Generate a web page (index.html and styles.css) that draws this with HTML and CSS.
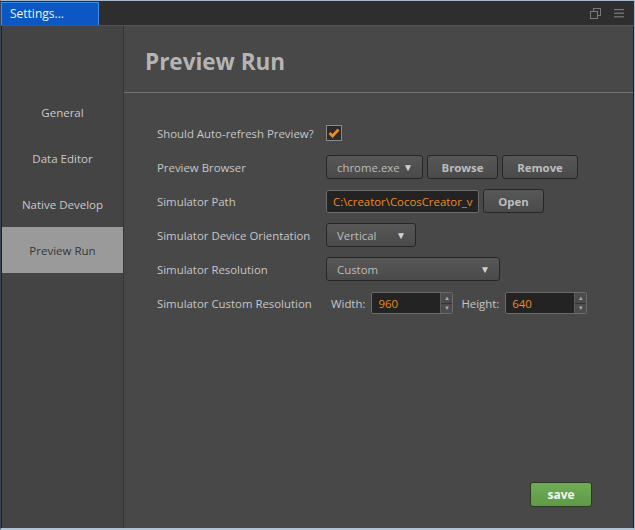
FILE: index.html
```html
<!DOCTYPE html>
<html>
<head>
<meta charset="utf-8">
<link rel="stylesheet" href="styles.css">
</head>
<body>
<div class="frame">
  <div class="titlebar">
    <div class="tab">Settings...</div>
    <div class="tools">
      <svg class="ico" width="11" height="11" viewBox="0 0 11 11"><rect x="3.5" y="0.5" width="7" height="7" fill="none" stroke="#7a7a7a"/><rect x="0.5" y="3.5" width="7" height="7" fill="#2f2f2f" stroke="#7a7a7a"/></svg>
      <svg class="ico" width="10" height="9" viewBox="0 0 10 9"><rect x="0" y="0" width="10" height="1.2" fill="#7a7a7a"/><rect x="0" y="3.6" width="10" height="1.2" fill="#7a7a7a"/><rect x="0" y="7.2" width="10" height="1.2" fill="#7a7a7a"/></svg>
    </div>
  </div>
  <div class="main">
    <nav class="sidebar">
      <div class="nav-item">General</div>
      <div class="nav-item">Data Editor</div>
      <div class="nav-item">Native Develop</div>
      <div class="nav-item active">Preview Run</div>
    </nav>
    <section class="content">
      <header class="head"><h1>Preview Run</h1></header>
      <div class="form">
        <div class="row">
          <div class="label">Should Auto-refresh Preview?</div>
          <div class="ctl">
            <span class="check"><svg width="12" height="10" viewBox="0 0 12 10"><path d="M1.5 5 L4.5 8 L10.5 1.5" fill="none" stroke="#f08c22" stroke-width="2.6"/></svg></span>
          </div>
        </div>
        <div class="row">
          <div class="label">Preview Browser</div>
          <div class="ctl">
            <div class="select w-chrome"><span>chrome.exe</span><span class="arrow">&#9660;</span></div>
            <button class="btn w-browse">Browse</button>
            <button class="btn w-remove">Remove</button>
          </div>
        </div>
        <div class="row">
          <div class="label">Simulator Path</div>
          <div class="ctl">
            <div class="input w-path">C:\creator\CocosCreator_v</div>
            <button class="btn w-open">Open</button>
          </div>
        </div>
        <div class="row">
          <div class="label">Simulator Device Orientation</div>
          <div class="ctl">
            <div class="select w-vert"><span>Vertical</span><span class="arrow">&#9660;</span></div>
          </div>
        </div>
        <div class="row">
          <div class="label">Simulator Resolution</div>
          <div class="ctl">
            <div class="select w-custom"><span>Custom</span><span class="arrow">&#9660;</span></div>
          </div>
        </div>
        <div class="row">
          <div class="label">Simulator Custom Resolution</div>
          <div class="ctl res">
            <span class="sub">Width:</span>
            <div class="num"><span class="val">960</span><span class="spin"><span class="up">&#9650;</span><span class="dn">&#9660;</span></span></div>
            <span class="sub sub2">Height:</span>
            <div class="num"><span class="val">640</span><span class="spin"><span class="up">&#9650;</span><span class="dn">&#9660;</span></span></div>
          </div>
        </div>
      </div>
      <div class="footer"><button class="save">save</button></div>
    </section>
  </div>
</div>
</body>
</html>
```

FILE: styles.css
```css
html, body { margin: 0; padding: 0; }
body { background: #b9c6d6; font-family: "Open Sans", "Noto Sans", sans-serif; }
.frame {
  width: 635px; height: 530px; box-sizing: border-box;
  border: 1px solid #a7b6c8; border-left-color: #3c4656; border-bottom: 2px solid #b3c2d4;
  background: #1f1f1f; display: flex; flex-direction: column;
}
.titlebar {
  height: 24px; background: #2e2e2e; border-bottom: 1px solid #555;
  display: flex; align-items: stretch; justify-content: space-between;
}
.tab {
  width: 98px; box-sizing: border-box; margin-top: 1px;
  background: #0b57c3; border: 1px solid #3b8de6; border-bottom: none;
  color: #f2f2f2; font-size: 12px; line-height: 22px; padding-left: 8px;
}
.tools { display: flex; align-items: center; gap: 13px; padding-right: 10px; }
.ico { display: block; }
.main { flex: 1; display: flex; margin: 0 1px 0 1px; min-height: 0; }
.sidebar {
  width: 121px; background: #444; border-right: 1px solid #363636;
  padding-top: 63px; display: flex; flex-direction: column;
}
.nav-item {
  height: 46px; display: flex; align-items: center; justify-content: center;
  color: #c9c9c9; font-size: 11.5px;
}
.nav-item.active { background: #9a9a9a; color: #363636; }
.content { flex: 1; background: #484848; display: flex; flex-direction: column; }
.head { height: 66px; border-bottom: 1px solid #737373; display: flex; align-items: flex-end; }
.head h1 {
  margin: 0 0 17px 21px; font-size: 22.5px; font-weight: bold; color: #b4b4b4;
  line-height: 26px;
}
.form { padding: 23px 0 0 33px; }
.row { height: 34px; display: flex; align-items: center; }
.label { width: 169px; color: #c6c6c6; font-size: 11.4px; }
.ctl { display: flex; align-items: center; gap: 4px; }
.check {
  width: 14px; height: 14px; border: 1px solid #8a8a8a; background: #2b2b2b;
  display: flex; align-items: center; justify-content: center;
}
.select, .btn {
  height: 24px; box-sizing: border-box; border: 1px solid #262626; border-radius: 3px;
  background: linear-gradient(#575757, #4a4a4a); color: #bdbdbd; font-size: 11.4px;
  font-family: inherit;
}
.select { display: flex; align-items: center; justify-content: space-between; padding: 0 9px 0 10px; }
.arrow { font-size: 10px; color: #d0d0d0; }
.btn { font-weight: bold; padding: 0; cursor: default; }
.w-chrome { width: 97px; }
.w-browse { width: 71px; }
.w-remove { width: 76px; }
.w-path { width: 153px; }
.w-open { width: 61px; }
.w-vert { width: 90px; }
.w-custom { width: 174px; }
.input {
  height: 23px; box-sizing: border-box; border: 1px solid #6a6a6a; border-radius: 2px;
  background: #232323; color: #ef8a22; font-size: 11.4px; padding-left: 6px;
  display: flex; align-items: center; overflow: hidden; white-space: nowrap;
}
.res { gap: 0; margin-left: 5px; }
.sub { color: #c6c6c6; font-size: 11.4px; margin-right: 6px; }
.sub2 { margin-left: 8px; }
.num {
  width: 82px; height: 22px; box-sizing: border-box; border: 1px solid #6a6a6a; border-radius: 2px;
  background: #232323; display: flex; align-items: stretch;
}
.val { flex: 1; color: #ef8a22; font-size: 11.4px; padding-left: 6px; display: flex; align-items: center; }
.spin { width: 11px; background: #4c4c4c; border-left: 1px solid #5e5e5e; display: flex; flex-direction: column; }
.spin span { flex: 1; font-size: 6px; color: #aaa; display: flex; align-items: center; justify-content: center; }
.spin .up { border-bottom: 1px solid #333; }
.footer { margin-top: auto; display: flex; justify-content: flex-end; padding: 0 41px 21px 0; }
.save {
  width: 62px; height: 25px; box-sizing: border-box; border: 1px solid #2b3a22; border-radius: 3px;
  background: linear-gradient(#6fad55, #5f9a47); color: #f4f4f4; font-weight: bold; font-size: 12px;
  font-family: inherit; padding: 0;
}
```
